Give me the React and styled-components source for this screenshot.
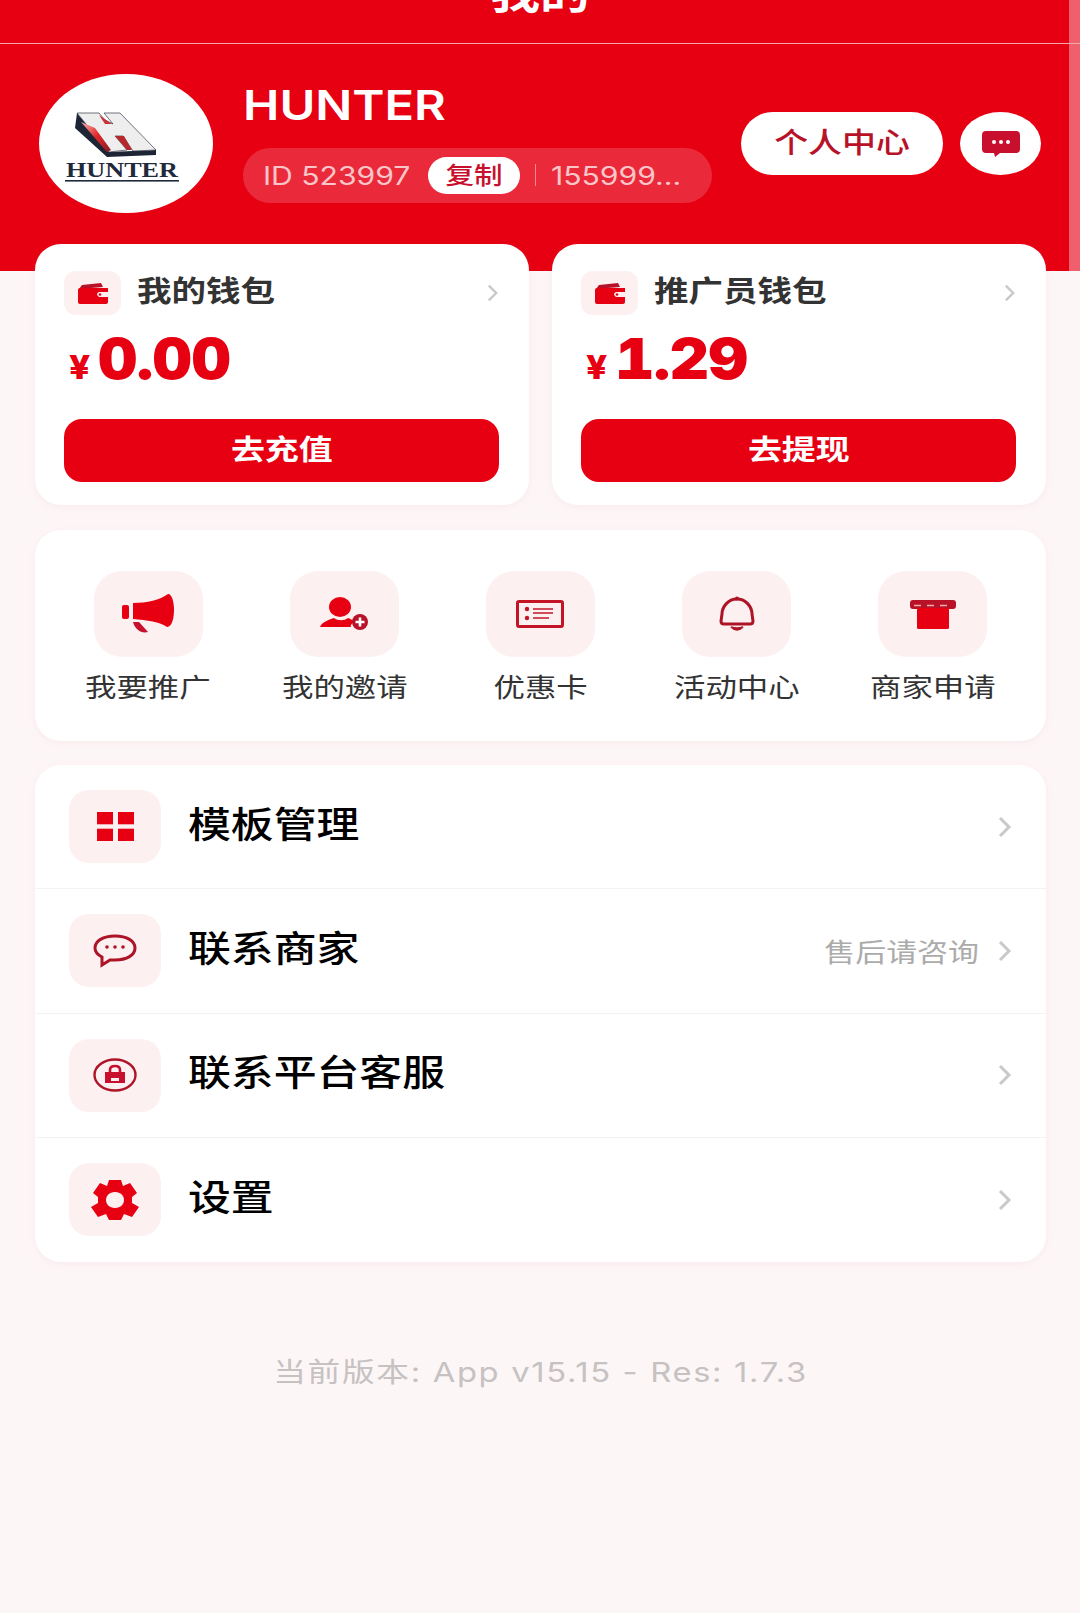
import React from 'react';
import styled, { createGlobalStyle, css } from 'styled-components';

const RED = '#e60012';
const DARK_RED = '#b81229';
const TINT = '#fdf0f1';

const wide = css`
    transform: scaleX(1.19);
`;
const wideLeft = css`
    transform: scaleX(1.19);
    transform-origin: left center;
`;

const GlobalStyle = createGlobalStyle`
    * { box-sizing: border-box; }
    html, body {
        margin: 0;
        padding: 0;
        background: #fdf6f7;
        font-family: Inter, "Noto Sans CJK SC", "Noto Sans", sans-serif;
    }
`;

const Chevron = ({ size = 'small' }) => (
    <ChevronSvg $size={size} viewBox="0 0 15 22">
        <polyline points="3,2 12,11 3,20" fill="none" stroke="#c9c9c9" strokeWidth="3" />
    </ChevronSvg>
);

const Logo = () => (
    <svg width="174" height="139" viewBox="0 0 174 139">
        <defs>
            <linearGradient id="hFace" x1="0" y1="0" x2="1" y2="1">
                <stop offset="0" stopColor="#f5b5b0" />
                <stop offset="0.5" stopColor="#e0262a" />
                <stop offset="1" stopColor="#8a1a22" />
            </linearGradient>
        </defs>
        <path d="M38 39 L36 54 L68 83 L117 81 L117 76 L70 78 Z" fill="#1d2436" />
        <path d="M38 39 L60 39 L66 46 L74 50 L65 39 L81 39 L117 76 L94 77 L84 62 L76 62 L88 76 L70 78 Z" fill="#eeeeef" stroke="#333a48" strokeWidth="0.7" />
        <path d="M42 48 L56 54 L72 76 L68 78 Z" fill="url(#hFace)" />
        <path d="M60 41 L73 50 L66 50 Z" fill="#c7353a" />
        <path d="M76 62 L85 62 L93 76 L88 76 Z" fill="#b5282c" />
        <text x="27" y="103" fontFamily="'Liberation Serif', serif" fontWeight="700" fontSize="20" textLength="112" lengthAdjust="spacingAndGlyphs" fill="#1f2a3c">HUNTER</text>
        <rect x="26" y="106" width="114" height="1.6" fill="#1f2a3c" />
    </svg>
);

const WalletIcon = () => (
    <svg width="30" height="21" viewBox="0 0 30 21">
        <path d="M1 6 L4 2 L23 0 L25 4 L1 6Z" fill={DARK_RED} />
        <path d="M0 7 Q0 5 2 5 L30 5 L30 9 L21 9 Q17 11 21 14 L30 14 L30 19 Q30 21 28 21 L2 21 Q0 21 0 19Z" fill={RED} />
        <circle cx="22" cy="11.5" r="1.3" fill={RED} />
    </svg>
);

const Megaphone = () => (
    <svg width="52" height="40" viewBox="0 0 52 40">
        <rect x="0" y="11" width="7" height="14" rx="2" fill={RED} />
        <path d="M11 9 C25 9 38 6 46 0 C50 0 52 8 52 16 C52 24 50 33 45 33 C38 28 25 26 11 25Z" fill={RED} />
        <path d="M11 28 L17 28 L26 38 C19 40 13 35 11 28Z" fill="#c8102e" />
    </svg>
);

const PersonPlus = () => (
    <svg width="48" height="34" viewBox="0 0 48 34">
        <ellipse cx="20" cy="10" rx="11" ry="10" fill={RED} />
        <path d="M0 30 C2 25 8 23 14 21 C18 24 24 24 28 21 C31 22 33 23 34 25 C31 27 30 29 31 30Z" fill={RED} />
        <circle cx="40" cy="25" r="8" fill={DARK_RED} />
        <path d="M40 20.5 V29.5 M35.5 25 H44.5" stroke="#fff" strokeWidth="2.6" />
    </svg>
);

const CardIcon = () => (
    <svg width="48" height="28" viewBox="0 0 48 28">
        <rect x="1.5" y="1.5" width="45" height="25" rx="1.5" fill="none" stroke="#c41527" strokeWidth="3" />
        <circle cx="11" cy="9" r="2.2" fill="#c41527" />
        <circle cx="11" cy="18" r="2.2" fill="#c41527" />
        <path d="M17 9 H37 M17 13 H37 M17 18 H33" stroke="#c41527" strokeWidth="1.6" />
    </svg>
);

const Bell = () => (
    <svg width="36" height="36" viewBox="0 0 36 36">
        <path d="M18 3 C9 3 3 11 3 18 L2 25 Q2 28 5 28 L31 28 Q34 28 34 25 L33 18 C33 11 27 3 18 3Z" fill="none" stroke="#ad1427" strokeWidth="3" />
        <circle cx="18" cy="2.6" r="2" fill="#ad1427" />
        <path d="M12 31 Q18 37 24 31 Q18 33 12 31Z" fill="#ad1427" stroke="#ad1427" strokeWidth="1.5" />
    </svg>
);

const BoxIcon = () => (
    <svg width="46" height="29" viewBox="0 0 46 29">
        <rect x="0" y="0" width="46" height="9" rx="3" fill="#b81229" />
        <path d="M4 5.5 H42" stroke="#f6a8ad" strokeWidth="1.4" strokeDasharray="7 6" />
        <rect x="7" y="8" width="32" height="21" rx="1.5" fill={RED} />
    </svg>
);

const GridIcon = () => (
    <svg width="37" height="29" viewBox="0 0 37 29">
        <rect x="0" y="0" width="16" height="12.3" fill={RED} />
        <rect x="21" y="0" width="16" height="12.3" fill={RED} />
        <rect x="0" y="16.7" width="16" height="12.3" fill={RED} />
        <rect x="21" y="16.7" width="16" height="12.3" fill={RED} />
    </svg>
);

const ChatOutline = () => (
    <svg width="44" height="34" viewBox="0 0 44 34">
        <path d="M22 2 C10 2 2 7 2 14 C2 18 5 21 9 23 L9 31 L17 26 C19 26 20 26 22 26 C34 26 42 21 42 14 C42 7 34 2 22 2Z" fill="none" stroke="#ad1427" strokeWidth="3" />
        <circle cx="14" cy="13" r="1.8" fill="#ad1427" />
        <circle cx="22" cy="13" r="1.8" fill="#ad1427" />
        <circle cx="30" cy="13" r="1.8" fill="#ad1427" />
    </svg>
);

const LockIcon = () => (
    <svg width="44" height="34" viewBox="0 0 44 34">
        <ellipse cx="22" cy="17" rx="20.5" ry="15.5" fill="none" stroke="#ad1427" strokeWidth="2.4" />
        <path d="M17 14 V12 Q17 8 22 8 Q27 8 27 12 V14" fill="none" stroke="#c8102e" strokeWidth="2.6" />
        <path d="M12 14 H32 V25 H12Z" fill="#c8102e" />
        <rect x="18" y="20" width="8" height="3" fill="#fdf0f1" />
    </svg>
);

const GearIcon = () => (
    <svg width="48" height="40" viewBox="0 0 48 40">
        <path fill={RED} fillRule="evenodd" d="M18 0 H30 L32 6 L39 3 L46 13 L41 17 V23 L48 27 L41 37 L33 34 L30 40 H18 L15 34 L7 37 L0 27 L7 23 V17 L2 13 L9 3 L16 6Z M24 12 C18 12 15 16 15 20 C15 24 18 28 24 28 C30 28 33 24 33 20 C33 16 30 12 24 12Z" />
    </svg>
);

const ChatSolid = () => (
    <svg width="38" height="26" viewBox="0 0 38 26">
        <path d="M4 0 H34 Q38 0 38 4 V18 Q38 22 34 22 H18 L13 26 L12 22 H4 Q0 22 0 18 V4 Q0 0 4 0Z" fill="#c8102e" />
        <circle cx="12" cy="11" r="2" fill="#fff" />
        <circle cx="19" cy="11" r="2" fill="#fff" />
        <circle cx="26" cy="11" r="2" fill="#fff" />
    </svg>
);

const wallets = [
    { title: '我的钱包', amount: '0.00', action: '去充值' },
    { title: '推广员钱包', amount: '1.29', action: '去提现' },
];

const shortcuts = [
    { label: '我要推广', icon: <Megaphone /> },
    { label: '我的邀请', icon: <PersonPlus /> },
    { label: '优惠卡', icon: <CardIcon /> },
    { label: '活动中心', icon: <Bell /> },
    { label: '商家申请', icon: <BoxIcon /> },
];

const menu = [
    { label: '模板管理', icon: <GridIcon /> },
    { label: '联系商家', icon: <ChatOutline />, hint: '售后请咨询' },
    { label: '联系平台客服', icon: <LockIcon /> },
    { label: '设置', icon: <GearIcon /> },
];

const App = () => {
    return (
        <Page>
            <GlobalStyle />
            <Header>
                <ScrollStrip />
                <NavBar>
                    <NavTitle>我的</NavTitle>
                </NavBar>
                <Profile>
                    <Avatar><Logo /></Avatar>
                    <ProfileInfo>
                        <Name>HUNTER</Name>
                        <IdPill>
                            <IdText>ID 523997</IdText>
                            <CopyBadge><CopyText>复制</CopyText></CopyBadge>
                            <PillDivider />
                            <IdText>155999...</IdText>
                        </IdPill>
                    </ProfileInfo>
                    <ProfileButton><ButtonText>个人中心</ButtonText></ProfileButton>
                    <RoundButton><ChatSolid /></RoundButton>
                </Profile>
            </Header>
            <Content>
                <Wallets>
                    {wallets.map((wallet) => (
                        <WalletCard key={wallet.title}>
                            <WalletHead>
                                <WalletIconBox><WalletIcon /></WalletIconBox>
                                <WalletTitle>{wallet.title}</WalletTitle>
                                <Chevron />
                            </WalletHead>
                            <Amount>
                                <Yen>¥</Yen>
                                <AmountValue>{wallet.amount}</AmountValue>
                            </Amount>
                            <WalletButton><ButtonText $bold>{wallet.action}</ButtonText></WalletButton>
                        </WalletCard>
                    ))}
                </Wallets>
                <Shortcuts>
                    {shortcuts.map((item) => (
                        <Shortcut key={item.label}>
                            <ShortcutIcon>{item.icon}</ShortcutIcon>
                            <ShortcutLabel>{item.label}</ShortcutLabel>
                        </Shortcut>
                    ))}
                </Shortcuts>
                <MenuCard>
                    {menu.map((item) => (
                        <MenuRow key={item.label}>
                            <MenuIcon>{item.icon}</MenuIcon>
                            <MenuLabel>{item.label}</MenuLabel>
                            {item.hint && <MenuHint>{item.hint}</MenuHint>}
                            <Chevron size="large" />
                        </MenuRow>
                    ))}
                </MenuCard>
                <Version>当前版本: App v15.15 - Res: 1.7.3</Version>
            </Content>
        </Page>
    );
};

const Page = styled.div`
    width: 1080px;
    height: 1613px;
    overflow: hidden;
    background: #fdf6f7;
`;
const Header = styled.header`
    position: relative;
    height: 271px;
    background: ${RED};
`;
const ScrollStrip = styled.div`
    position: absolute;
    top: 0;
    right: 0;
    bottom: 0;
    width: 11px;
    background: #ef5f6c;
`;
const NavBar = styled.div`
    position: relative;
    height: 44px;
    border-bottom: 1px solid #f4a6ab;
    overflow: hidden;
    text-align: center;
`;
const NavTitle = styled.div`
    margin-top: -31px;
    color: #fff;
    font-size: 42px;
    line-height: 50px;
    font-weight: 700;
    ${wide}
`;
const Profile = styled.div`
    display: flex;
    align-items: center;
    padding: 30px 0 0 39px;
`;
const Avatar = styled.div`
    width: 174px;
    height: 139px;
    flex-shrink: 0;
    border-radius: 50%;
    background: #fff;
    overflow: hidden;
    svg { display: block; }
`;
const ProfileInfo = styled.div`
    width: 469px;
    margin: 0 29px 2px 30px;
`;
const Name = styled.div`
    color: #fff;
    font-size: 41px;
    line-height: 44px;
    font-weight: 600;
    ${wideLeft}
`;
const IdPill = styled.div`
    display: flex;
    align-items: center;
    height: 55px;
    margin-top: 21px;
    padding-left: 20px;
    border-radius: 28px;
    background: #ea2a3a;
`;
const IdText = styled.span`
    color: #f9c5c9;
    font-size: 25.3px;
    white-space: nowrap;
    ${wideLeft}
`;
const CopyBadge = styled.span`
    display: flex;
    align-items: center;
    justify-content: center;
    width: 92px;
    height: 37px;
    margin-left: 41px;
    padding-bottom: 4px;
    border-radius: 19px;
    background: #fff;
`;
const CopyText = styled.span`
    color: #c8102e;
    font-size: 24px;
    font-weight: 500;
    ${wide}
`;
const PillDivider = styled.span`
    width: 1px;
    height: 22px;
    margin: 0 15px 0 15px;
    background: #f4878f;
`;
const ProfileButton = styled.div`
    display: flex;
    align-items: center;
    justify-content: center;
    width: 202px;
    height: 63px;
    flex-shrink: 0;
    padding-bottom: 6px;
    border-radius: 32px;
    background: #fff;
    color: ${DARK_RED};
`;
const ButtonText = styled.span`
    font-size: 28.5px;
    font-weight: ${props => props.$bold ? 700 : 500};
    ${wide}
`;
const RoundButton = styled.div`
    display: flex;
    align-items: center;
    justify-content: center;
    width: 81px;
    height: 63px;
    flex-shrink: 0;
    margin-left: 17px;
    border-radius: 50%;
    background: #fff;
`;
const Content = styled.main`
    position: relative;
    margin-top: -27px;
    padding: 0 34px 0 35px;
`;
const Wallets = styled.div`
    display: grid;
    grid-template-columns: 1fr 1fr;
    gap: 23px;
`;
const WalletCard = styled.div`
    height: 261px;
    padding: 27px 30px 0 29px;
    border-radius: 26px;
    background: #fff;
    box-shadow: 0 2px 10px rgba(200, 120, 120, 0.08);
`;
const WalletHead = styled.div`
    display: flex;
    align-items: center;
    height: 44px;
`;
const WalletIconBox = styled.div`
    display: flex;
    align-items: center;
    justify-content: center;
    width: 57px;
    height: 44px;
    border-radius: 12px;
    background: ${TINT};
`;
const WalletTitle = styled.div`
    flex: 1;
    margin-left: 16px;
    padding-bottom: 8px;
    color: #333;
    font-size: 29px;
    font-weight: 700;
    ${wideLeft}
`;
const Amount = styled.div`
    display: flex;
    align-items: baseline;
    height: 104px;
    padding: 14px 0 0 5px;
    color: ${RED};
    line-height: 60px;
`;
const Yen = styled.span`
    margin-right: 10px;
    font-size: 32px;
    font-weight: 800;
    transform: scaleX(1.15);
    transform-origin: left center;
`;
const AmountValue = styled.span`
    font-size: 57px;
    font-weight: 900;
    letter-spacing: -0.5px;
    font-variant-numeric: tabular-nums;
    transform: scaleX(1.07);
    transform-origin: left center;
`;
const WalletButton = styled.div`
    display: flex;
    align-items: center;
    justify-content: center;
    height: 63px;
    padding-bottom: 6px;
    border-radius: 18px;
    background: ${RED};
    color: #fff;
`;
const Shortcuts = styled.div`
    display: grid;
    grid-template-columns: repeat(5, 1fr);
    height: 211px;
    margin-top: 25px;
    padding: 41px 15px 0;
    border-radius: 26px;
    background: #fff;
    box-shadow: 0 2px 10px rgba(200, 120, 120, 0.08);
`;
const Shortcut = styled.div`
    display: flex;
    flex-direction: column;
    align-items: center;
`;
const ShortcutIcon = styled.div`
    display: flex;
    align-items: center;
    justify-content: center;
    width: 109px;
    height: 86px;
    border-radius: 28px;
    background: ${TINT};
`;
const ShortcutLabel = styled.div`
    margin-top: 10px;
    color: #333;
    font-size: 26.4px;
    line-height: 40px;
    ${wide}
`;
const MenuCard = styled.div`
    margin-top: 24px;
    border-radius: 26px;
    background: #fff;
    box-shadow: 0 2px 10px rgba(200, 120, 120, 0.08);
`;
const MenuRow = styled.div`
    display: flex;
    align-items: center;
    height: 124.25px;
    padding: 0 34px;
    border-bottom: 1px solid #f7f2f2;
    &:last-child { border-bottom: 0; }
`;
const MenuIcon = styled.div`
    display: flex;
    align-items: center;
    justify-content: center;
    width: 92px;
    height: 73px;
    border-radius: 20px;
    background: ${TINT};
`;
const MenuLabel = styled.div`
    flex: 1;
    margin-left: 27px;
    padding-bottom: 10px;
    color: #000;
    font-size: 36px;
    font-weight: 500;
    ${wideLeft}
`;
const MenuHint = styled.div`
    margin-right: 18px;
    color: #ababab;
    font-size: 26px;
    transform: scaleX(1.19);
    transform-origin: right center;
`;
const ChevronSvg = styled.svg`
    flex-shrink: 0;
    width: ${props => props.$size === 'large' ? '15px' : '13px'};
    height: ${props => props.$size === 'large' ? '22px' : '18px'};
`;
const Version = styled.div`
    margin-top: 90px;
    color: #c6c2c2;
    font-size: 27.5px;
    line-height: 40px;
    text-align: center;
    letter-spacing: 1.4px;
    ${wide}
`;

export default App;
